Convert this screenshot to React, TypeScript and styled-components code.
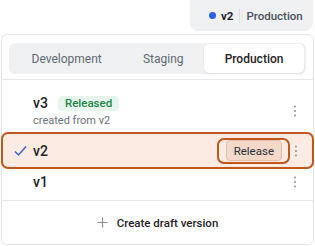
import React from "react";
import styled, { createGlobalStyle } from "styled-components";

const Global = createGlobalStyle`
  body {
    margin: 0;
    background: #ffffff;
    font-family: "Roboto", "Noto Sans", sans-serif;
    color: #1f2328;
  }
`;

const Page = styled.div`
  width: 315px;
  height: 246px;
  display: flex;
  flex-direction: column;
  align-items: flex-end;
  overflow: hidden;
`;

const EnvBadge = styled.div`
  height: 31px;
  width: 123px;
  margin-right: 2px;
  box-sizing: border-box;
  background: #eef0f2;
  border-radius: 0 0 8px 8px;
  display: flex;
  align-items: center;
  padding-left: 19px;
  font-size: 11.5px;
`;

const Dot = styled.span`
  width: 7px;
  height: 7px;
  border-radius: 50%;
  background: #2f5fe3;
  margin-right: 5px;
`;

const BadgeVersion = styled.span`
  font-weight: 700;
  color: #1f2328;
`;

const BadgeSep = styled.span`
  width: 1px;
  height: 14px;
  background: #d9dce0;
  margin: 0 6px 0 6px;
`;

const BadgeEnv = styled.span`
  color: #4b5159;
  font-weight: 500;
`;

const Card = styled.div`
  margin-top: 3px;
  width: 313px;
  margin-right: 1px;
  box-sizing: border-box;
  height: 211px;
  border: 1px solid #e3e6ea;
  border-radius: 6px;
  display: flex;
  flex-direction: column;
`;

const TabsWrap = styled.div`
  padding: 8px 7px 5px 7px;
  border-bottom: 1px solid #e3e6ea;
`;

const Tabs = styled.div`
  display: flex;
  background: #eef0f2;
  border-radius: 6px;
  padding: 1px 2px;
  height: 31px;
  box-sizing: border-box;
`;

const Tab = styled.div<{ $active?: boolean }>`
  flex: 1 1 auto;
  display: flex;
  align-items: center;
  justify-content: center;
  font-size: 12px;
  border-radius: 5px;
  color: ${(p) => (p.$active ? "#1f2328" : "#626a73")};
  font-weight: ${(p) => (p.$active ? 500 : 400)};
  background: ${(p) => (p.$active ? "#ffffff" : "transparent")};
  box-shadow: ${(p) => (p.$active ? "0 1px 2px rgba(0,0,0,0.08)" : "none")};
`;

const List = styled.div`
  display: flex;
  flex-direction: column;
  padding-top: 10px;
`;

const Row = styled.div<{ $selected?: boolean; $h: number }>`
  position: relative;
  height: ${(p) => p.$h}px;
  box-sizing: border-box;
  display: flex;
  align-items: center;
  padding-left: ${(p) => (p.$selected ? 30 : 29)}px;
  padding-right: 14px;
  margin: ${(p) => (p.$selected ? "0 -1px" : "0")};
  border: 2px solid ${(p) => (p.$selected ? "#c4561a" : "transparent")};
  border-radius: 7px;
  background: ${(p) => (p.$selected ? "#fbebe3" : "transparent")};
`;

const RowMain = styled.div`
  flex: 1;
  display: flex;
  flex-direction: column;
  gap: 3px;
`;

const TitleLine = styled.div`
  display: flex;
  align-items: center;
  gap: 10px;
`;

const Version = styled.span`
  font-size: 14px;
  font-weight: 500;
  color: #1f2328;
`;

const Status = styled.span`
  font-size: 11.5px;
  font-weight: 500;
  color: #1e8449;
  background: #e7f5ec;
  border-radius: 4px;
  padding: 0 7px;
  height: 15px;
  line-height: 15px;
`;

const Sub = styled.span`
  font-size: 11px;
  color: #6b7178;
`;

const Check = styled.svg`
  position: absolute;
  left: 11px;
  top: 50%;
  transform: translateY(-50%);
`;

const FocusRing = styled.span`
  border: 2px solid #c4561a;
  border-radius: 7px;
  padding: 0 6px 0 7px;
  margin-right: 4px;
  height: 26px;
  box-sizing: border-box;
  display: flex;
  align-items: center;
`;

const ReleaseButton = styled.button`
  font-family: inherit;
  font-size: 11.5px;
  color: #2b2f35;
  background: #f4d9cb;
  border: 1px solid #e3bfac;
  border-radius: 4px;
  height: 21px;
  padding: 0 7px;
`;

const Kebab = styled.svg`
  flex: none;
`;

const Footer = styled.div`
  margin-top: auto;
  height: 43px;
  border-top: 1px solid #e3e6ea;
  display: flex;
  align-items: center;
  justify-content: center;
  gap: 9px;
  font-size: 11.5px;
  font-weight: 500;
  color: #1f2328;
`;

const MoreIcon = () => (
  <Kebab width="4" height="12" viewBox="0 0 4 12">
    <circle cx="2" cy="1.5" r="1" fill="#8a9098" />
    <circle cx="2" cy="6" r="1" fill="#8a9098" />
    <circle cx="2" cy="10.5" r="1" fill="#8a9098" />
  </Kebab>
);

export default function App() {
  return (
    <Page>
      <Global />
      <EnvBadge>
        <Dot />
        <BadgeVersion>v2</BadgeVersion>
        <BadgeSep />
        <BadgeEnv>Production</BadgeEnv>
      </EnvBadge>
      <Card>
        <TabsWrap>
          <Tabs>
            <Tab>Development</Tab>
            <Tab>Staging</Tab>
            <Tab $active>Production</Tab>
          </Tabs>
        </TabsWrap>
        <List>
          <Row $h={42}>
            <RowMain>
              <TitleLine>
                <Version>v3</Version>
                <Status>Released</Status>
              </TitleLine>
              <Sub>created from v2</Sub>
            </RowMain>
            <MoreIcon />
          </Row>
          <Row $selected $h={37}>
            <Check width="13" height="11" viewBox="0 0 13 11">
              <path d="M1 6 L4.5 9.5 L12 1" stroke="#3b63d9" strokeWidth="1.5" fill="none" />
            </Check>
            <RowMain>
              <Version>v2</Version>
            </RowMain>
            <FocusRing>
              <ReleaseButton>Release</ReleaseButton>
            </FocusRing>
            <MoreIcon />
          </Row>
          <Row $h={26}>
            <RowMain>
              <Version>v1</Version>
            </RowMain>
            <MoreIcon />
          </Row>
        </List>
        <Footer>
          <svg width="11" height="11" viewBox="0 0 11 11">
            <path d="M5.5 0.5 V10.5 M0.5 5.5 H10.5" stroke="#8a9098" strokeWidth="1.2" />
          </svg>
          Create draft version
        </Footer>
      </Card>
    </Page>
  );
}
